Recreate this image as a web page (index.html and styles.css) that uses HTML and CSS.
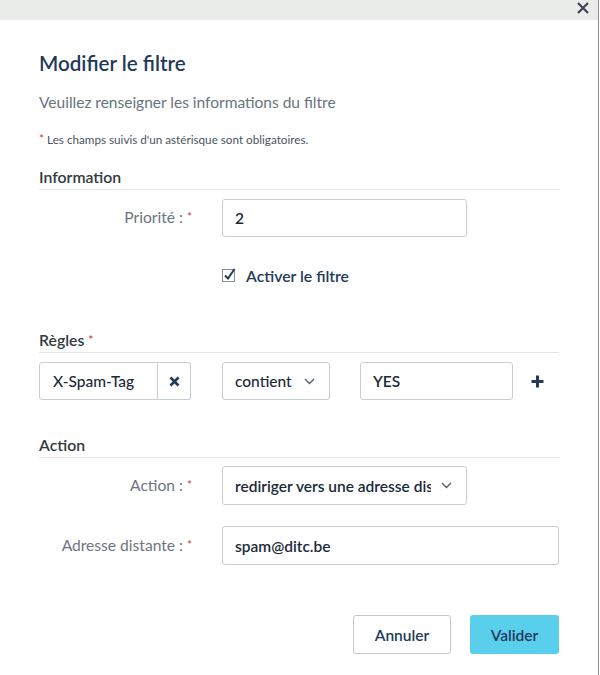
FILE: index.html
```html
<!DOCTYPE html>
<html lang="fr">
<head>
<meta charset="utf-8">
<title>Modifier le filtre</title>
<link rel="stylesheet" href="styles.css">
</head>
<body>
<div class="frame">
  <div class="topbar">
    <button class="close" aria-label="Fermer">
      <svg width="12" height="12" viewBox="0 0 12 12"><path d="M1 1 L11 11 M11 1 L1 11" stroke="#3b4654" stroke-width="2.2" fill="none"/></svg>
    </button>
  </div>
  <div class="modal">
    <h1 class="title">Modifier le filtre</h1>
    <p class="subtitle">Veuillez renseigner les informations du filtre</p>
    <p class="note"><span class="req">*</span> Les champs suivis d'un astérisque sont obligatoires.</p>

    <h2 class="section first">Information</h2>
    <div class="row">
      <label class="label">Priorité : <span class="req">*</span></label>
      <div class="control"><div class="input short">2</div></div>
    </div>
    <div class="row check-row">
      <div class="label"></div>
      <div class="control check">
        <svg width="14" height="14" viewBox="0 0 14 14"><rect x="0.5" y="1.5" width="12" height="12" fill="#fff" stroke="#8a9097"/><path d="M3 7.5 L6 10.5 L12.5 1" stroke="#1f3a5a" stroke-width="2" fill="none"/></svg>
        <span class="check-label">Activer le filtre</span>
      </div>
    </div>

    <h2 class="section rules">Règles <span class="req">*</span></h2>
    <div class="rule">
      <div class="group">
        <div class="input grp-input">X-Spam-Tag</div>
        <button class="grp-btn" aria-label="Supprimer">
          <svg width="11" height="11" viewBox="0 0 11 11"><path d="M1.5 1.5 L9.5 9.5 M9.5 1.5 L1.5 9.5" stroke="#1f3a5a" stroke-width="2.6" fill="none"/></svg>
        </button>
      </div>
      <div class="input select op"><span class="sel-text">contient</span><svg class="chev" width="11" height="7" viewBox="0 0 11 7"><path d="M1 1 L5.5 5.5 L10 1" stroke="#55606b" stroke-width="1.4" fill="none"/></svg></div>
      <div class="input val">YES</div>
      <button class="plus" aria-label="Ajouter">
        <svg width="13" height="13" viewBox="0 0 13 13"><path d="M6.5 0.5 V12.5 M0.5 6.5 H12.5" stroke="#1f3a5a" stroke-width="3" fill="none"/></svg>
      </button>
    </div>

    <h2 class="section action">Action</h2>
    <div class="row after-action">
      <label class="label">Action : <span class="req">*</span></label>
      <div class="control"><div class="input tall select short"><span class="sel-text">rediriger vers une adresse distante</span><svg class="chev" width="11" height="7" viewBox="0 0 11 7"><path d="M1 1 L5.5 5.5 L10 1" stroke="#55606b" stroke-width="1.4" fill="none"/></svg></div></div>
    </div>
    <div class="row addr">
      <label class="label">Adresse distante : <span class="req">*</span></label>
      <div class="control"><div class="input tall">spam@ditc.be</div></div>
    </div>

    <div class="actions">
      <button class="btn cancel">Annuler</button>
      <button class="btn ok">Valider</button>
    </div>
  </div>
</div>
</body>
</html>
```

FILE: styles.css
```css
* { box-sizing: border-box; }
html, body { margin: 0; padding: 0; background: #fff; }
body {
  font-family: Lato, "Noto Sans", "Liberation Sans", sans-serif;
  color: #1f3a5a;
}
.frame {
  width: 599px;
  height: 675px;
  border-right: 1px solid #8d8d8d;
}
.topbar {
  height: 20px;
  background: #e9ece9;
  display: flex;
  justify-content: flex-end;
  align-items: flex-start;
  padding-right: 9px;
}
.close {
  background: none;
  border: 0;
  padding: 0;
  margin-top: 2px;
  width: 12px;
  height: 12px;
  display: flex;
}
.modal {
  padding: 0 39px 0 39px;
}
.title {
  margin: 31px 0 0;
  font-size: 20.6px;
  line-height: 24px;
  font-weight: 600;
  color: #1f3a5a;
}
.subtitle {
  margin: 17px 0 0;
  font-size: 15.5px;
  line-height: 20px;
  color: #68737d;
}
.note {
  margin: 19px 0 0;
  font-size: 11.7px;
  line-height: 16px;
  color: #4a545e;
}
.req { color: #c8483a; font-size: 12px; vertical-align: top; }
.section {
  margin: 20px 0 0;
  font-size: 15.8px;
  line-height: 20px;
  font-weight: 600;
  color: #333a40;
  padding-bottom: 2px;
  border-bottom: 1px solid #e3e5e6;
}
.section.rules { margin-top: 45px; }
.section.action { margin-top: 35px; }
.row {
  display: grid;
  grid-template-columns: 153px 1fr;
  column-gap: 30px;
  align-items: center;
  margin-top: 9px;
}
.row.after-action { margin-top: 8px; }
.row.check-row { margin-top: 28px; }
.row.addr { margin-top: 21px; }
.label {
  text-align: right;
  font-size: 15.6px;
  line-height: 20px;
  color: #6b7580;
  padding-bottom: 2px;
}
.input {
  height: 38px;
  border: 1px solid #c9cdd0;
  border-radius: 3px;
  background: #fff;
  padding: 0 12px;
  display: flex;
  align-items: center;
  font-size: 15.5px;
  font-weight: 600;
  color: #1b2a3a;
  white-space: nowrap;
  overflow: hidden;
}
.input.tall { height: 39px; }
.input.short { width: 245px; }
.check {
  display: flex;
  align-items: center;
  gap: 10px;
  height: 20px;
}
.check-label {
  font-size: 15.8px;
  font-weight: 600;
  color: #1f3a5a;
}
.rule {
  display: flex;
  align-items: center;
  margin-top: 9px;
}
.group { display: flex; width: 152px; }
.grp-input {
  width: 119px;
  border-radius: 3px 0 0 3px;
  padding-left: 13px;
  font-weight: 500;
}
.grp-btn {
  width: 33px;
  height: 38px;
  border: 1px solid #c9cdd0;
  border-left: 0;
  border-radius: 0 3px 3px 0;
  background: #fff;
  display: flex;
  align-items: center;
  justify-content: center;
  padding: 0;
}
.select { justify-content: space-between; gap: 10px; padding-right: 14px; }
.sel-text { overflow: hidden; flex: 1; }
.op { width: 108px; margin-left: 31px; font-weight: 500; }
.val { width: 153px; margin-left: 30px; }
.plus {
  margin-left: 18px;
  background: none;
  border: 0;
  padding: 0;
  display: flex;
}
.actions {
  margin-top: 50px;
  display: flex;
  justify-content: flex-end;
  gap: 19px;
}
.btn {
  height: 39px;
  border-radius: 3px;
  font-family: inherit;
  font-size: 15.5px;
  font-weight: 600;
  color: #1f3a5a;
  padding: 0;
}
.btn.cancel { width: 98px; background: #fff; border: 1px solid #c3c7ca; }
.btn.ok { width: 89px; background: #5acfec; border: 0; }
```
